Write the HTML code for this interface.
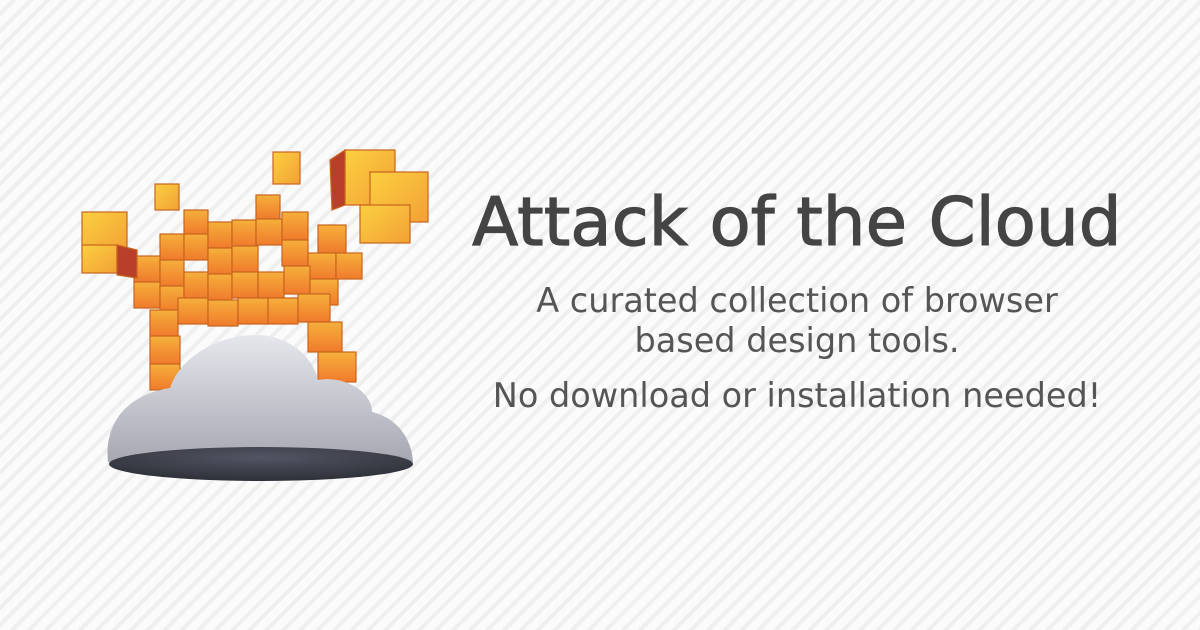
<!DOCTYPE html>
<html><head><meta charset="utf-8">
<style>
html,body{margin:0;padding:0}
body{width:1200px;height:630px;overflow:hidden;position:relative;
background-color:#fbfbfb;
background-image:repeating-linear-gradient(135deg,#fbfbfb 0 8px,#efefef 8px 12px);
font-family:"DejaVu Sans","Liberation Sans",sans-serif;}
.t{position:absolute;left:0;width:1594px;text-align:center;color:#444;white-space:nowrap}
#h{top:183px;font-size:67px;-webkit-text-stroke:1.3px #444;letter-spacing:0.3px}
.s{font-size:33.5px;color:#555}
</style></head><body>
<svg width="460" height="520" style="position:absolute;left:0;top:0" viewBox="0 0 460 520">
<defs>
<linearGradient id="o" x1="0" y1="0" x2="0" y2="1"><stop offset="0" stop-color="#f5b03c"/><stop offset="1" stop-color="#f07a2c"/></linearGradient>
<linearGradient id="y" x1="0" y1="0" x2="1" y2="1"><stop offset="0" stop-color="#fbd040"/><stop offset="1" stop-color="#f2a035"/></linearGradient>
<linearGradient id="c" x1="0" y1="0" x2="0" y2="1"><stop offset="0" stop-color="#e6e7ec"/><stop offset="1" stop-color="#a6a7b2"/></linearGradient>
<radialGradient id="e" cx="0.5" cy="0.3" r="0.7"><stop offset="0" stop-color="#525563"/><stop offset="1" stop-color="#2e3038"/></radialGradient>
</defs>
<g stroke="#c9651f" stroke-width="1.2" fill="url(#o)">
<rect x="184" y="210" width="24" height="24"/><rect x="256" y="195" width="24" height="24"/>
<rect x="160" y="234" width="24" height="26"/><rect x="184" y="234" width="24" height="26"/><rect x="208" y="222" width="24" height="26"/><rect x="232" y="220" width="24" height="26"/><rect x="256" y="219" width="26" height="26"/><rect x="282" y="212" width="26" height="28"/><rect x="318" y="225" width="28" height="28"/>
<rect x="134" y="256" width="26" height="26"/><rect x="160" y="260" width="24" height="26"/><rect x="208" y="248" width="24" height="26"/><rect x="232" y="246" width="26" height="26"/><rect x="282" y="240" width="26" height="26"/><rect x="308" y="253" width="28" height="26"/><rect x="336" y="253" width="26" height="26"/>
<rect x="134" y="282" width="26" height="26"/><rect x="160" y="286" width="24" height="26"/><rect x="184" y="272" width="24" height="26"/><rect x="208" y="274" width="24" height="26"/><rect x="232" y="272" width="26" height="26"/><rect x="258" y="272" width="26" height="26"/><rect x="284" y="266" width="26" height="28"/><rect x="310" y="279" width="28" height="26"/>
<rect x="150" y="310" width="28" height="26"/><rect x="178" y="298" width="30" height="26"/><rect x="208" y="300" width="30" height="26"/><rect x="238" y="298" width="30" height="26"/><rect x="268" y="298" width="30" height="26"/><rect x="298" y="294" width="32" height="28"/>
<rect x="150" y="336" width="30" height="28"/><rect x="308" y="322" width="34" height="30"/>
<rect x="150" y="364" width="30" height="26"/><rect x="318" y="352" width="38" height="30"/>
</g>
<g stroke="#c9651f" stroke-width="1.2" fill="url(#y)">
<rect x="155" y="184" width="24" height="26"/>
<rect x="273" y="152" width="27" height="32"/>
<rect x="345" y="150" width="50" height="55"/>
<polygon points="330,160 345,150 345,205 332,210" fill="#b8402a"/>
<rect x="370" y="172" width="58" height="50"/>
<rect x="360" y="205" width="50" height="38"/>
<rect x="82" y="212" width="45" height="40"/>
<rect x="82" y="245" width="35" height="28"/>
<polygon points="117,245 137,250 137,278 117,275" fill="#b8402a"/>
</g>
<path d="M108,462 C104,425 125,395 170,388 C182,352 230,330 268,336 C300,342 315,365 318,380 C345,375 372,392 372,412 C398,418 412,440 413,462 Z" fill="url(#c)"/>
<ellipse cx="261" cy="464" rx="152" ry="17" fill="url(#e)"/>
</svg>
<div class="t" id="h">Attack of the Cloud</div>
<div class="t s" style="top:281px">A curated collection of browser</div>
<div class="t s" style="top:321px">based design tools.</div>
<div class="t s" style="top:376px">No download or installation needed!</div>
</body></html>
